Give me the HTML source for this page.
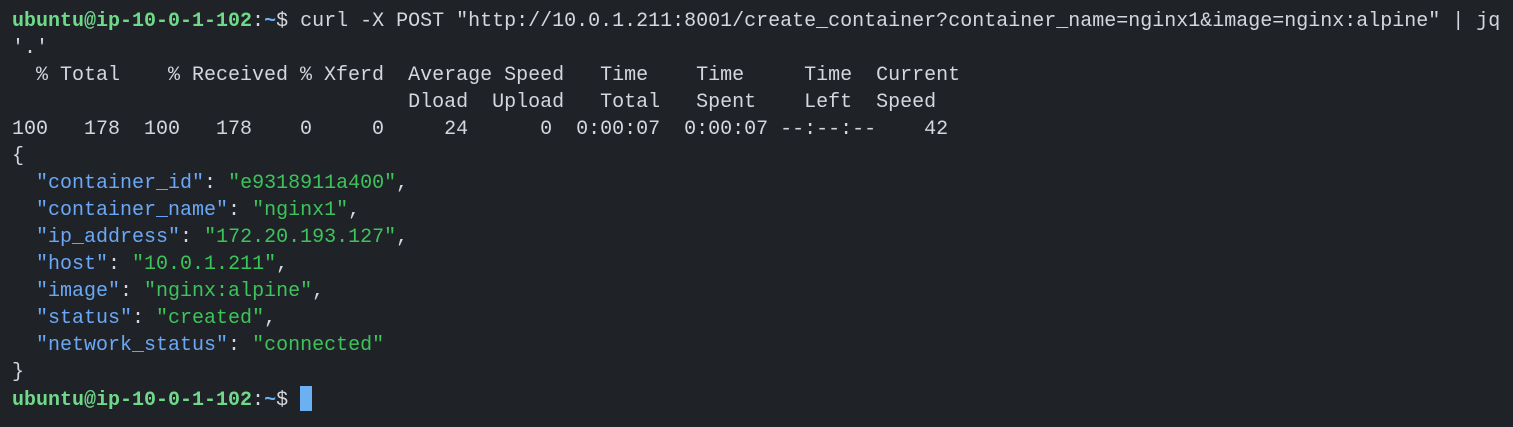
<!DOCTYPE html>
<html><head><meta charset="utf-8"><style>
html,body{margin:0;padding:0;background:#1f2328;width:1513px;height:427px;overflow:hidden}
pre{margin:0;position:absolute;left:12px;top:8px;font-family:"Liberation Mono",monospace;font-size:20px;line-height:27px;color:#d4d8de;white-space:pre}
.p{color:#6fd98a;font-weight:bold}.t{color:#6ab0f3;font-weight:bold}
.k{color:#6aa8f7}.s{color:#3cc45a}
.c{display:inline-block;width:12px;height:25px;background:#6ab0f3;vertical-align:-6px}
</style></head><body><pre><span class="p">ubuntu@ip-10-0-1-102</span>:<span class="t">~</span>$ curl -X POST "http://10.0.1.211:8001/create_container?container_name=nginx1&amp;image=nginx:alpine" | jq
'.'
  % Total    % Received % Xferd  Average Speed   Time    Time     Time  Current
                                 Dload  Upload   Total   Spent    Left  Speed
100   178  100   178    0     0     24      0  0:00:07  0:00:07 --:--:--    42
{
  <span class="k">"container_id"</span>: <span class="s">"e9318911a400"</span>,
  <span class="k">"container_name"</span>: <span class="s">"nginx1"</span>,
  <span class="k">"ip_address"</span>: <span class="s">"172.20.193.127"</span>,
  <span class="k">"host"</span>: <span class="s">"10.0.1.211"</span>,
  <span class="k">"image"</span>: <span class="s">"nginx:alpine"</span>,
  <span class="k">"status"</span>: <span class="s">"created"</span>,
  <span class="k">"network_status"</span>: <span class="s">"connected"</span>
}
<span class="p">ubuntu@ip-10-0-1-102</span>:<span class="t">~</span>$ <span class="c"></span></pre></body></html>
